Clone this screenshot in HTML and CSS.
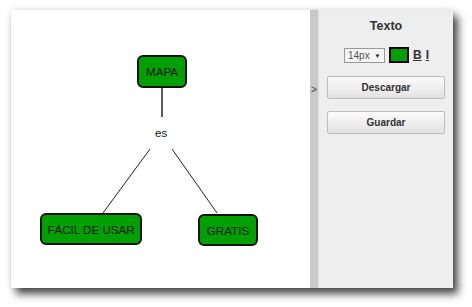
FILE: index.html
```html
<!DOCTYPE html>
<html lang="es">
<head>
  <meta charset="UTF-8" />
  <title>Mapa conceptual</title>
  <link rel="stylesheet" href="styles.css">
</head>
<body>
  <div class="page">
    <!-- ventana del editor -->
    <div class="window">
      <!-- lienzo con el mapa -->
      <div class="canvas">
        <svg class="links" width="299" height="278">
          <line x1="151" y1="78" x2="151" y2="107" class="link-thick" />
          <line x1="139" y1="139" x2="92" y2="203" />
          <line x1="161" y1="139" x2="206" y2="203" />
        </svg>
        <div class="node node-mapa">MAPA</div>
        <div class="label label-es">es</div>
        <div class="node node-facil">FÁCIL DE USAR</div>
        <div class="node node-gratis">GRATIS</div>
      </div>

      <!-- barra para ocultar el panel -->
      <div class="divider"><span class="divider-arrow">&gt;</span></div>

      <!-- panel lateral -->
      <div class="panel">
        <div class="panel-title">Texto</div>
        <div class="text-tools">
          <div class="size-select">14px <span class="size-arrow">▼</span></div>
          <div class="swatch"></div>
          <span class="fmt fmt-b">B</span>
          <span class="fmt fmt-i">I</span>
        </div>
        <button class="panel-btn btn-first">Descargar</button>
        <button class="panel-btn">Guardar</button>
      </div>
    </div>
  </div>
</body>
</html>
```

FILE: styles.css
```css
* {
  box-sizing: border-box;
}

html, body {
  margin: 0;
  padding: 0;
  background-color: #ffffff;
  font-family: 'Liberation Sans', Arial, sans-serif;
  color: #111;
  overflow: hidden;
}

.page {
  padding: 10px 0 0 11px;
  height: 307px;
}

/* ===== ventana ===== */
.window {
  display: flex;
  width: 442px;
  height: 278px;
  background-color: #fff;
  box-shadow: 5px 6px 8px rgba(0, 0, 0, 0.7), 0 0 6px rgba(0, 0, 0, 0.12);
}

/* ===== lienzo ===== */
.canvas {
  position: relative;
  width: 299px;
  height: 100%;
  background-color: #fff;
  overflow: hidden;
}

.links {
  position: absolute;
  left: 0;
  top: 0;
}

.links line {
  stroke: #222;
  stroke-width: 1;
}

.links .link-thick {
  stroke: #333;
  stroke-width: 1.6;
}

.node {
  position: absolute;
  display: flex;
  align-items: center;
  justify-content: center;
  background-color: #00a000;
  border: 2px solid #111;
  border-radius: 6px;
  font-size: 11.6px;
  color: #111;
}

.node-mapa   { left: 126px; top: 45px;  width: 50px;  height: 33px; }
.node-facil  { left: 29px;  top: 203px; width: 102px; height: 32px; }
.node-gratis { left: 187px; top: 204px; width: 60px;  height: 32px; }

.label {
  position: absolute;
  font-size: 11.6px;
  color: #111;
}

.label-es {
  left: 144px;
  top: 116px;
}

/* ===== separador ===== */
.divider {
  width: 9px;
  height: 100%;
  background-color: #c9c9c9;
  border-right: 1px solid #dedede;
  padding-top: 69px;
  text-align: center;
}

.divider-arrow {
  font-size: 10px;
  color: #444;
  line-height: 12px;
}

/* ===== panel lateral ===== */
.panel {
  flex: 1;
  display: flex;
  flex-direction: column;
  align-items: center;
  background-color: #eeeeee;
  padding: 8px 8px 0;
}

.panel-title {
  font-size: 12.5px;
  font-weight: bold;
  color: #333;
  line-height: 16px;
}

.text-tools {
  display: flex;
  align-items: center;
  margin-top: 13px;
  height: 16px;
  padding-left: 1px;
}

.size-select {
  width: 41px;
  height: 15px;
  border: 1px solid #999;
  background-color: #f4f4f4;
  font-size: 10px;
  color: #555;
  line-height: 13px;
  padding-left: 3px;
}

.size-arrow {
  font-size: 6px;
  color: #111;
  margin-left: 2px;
  vertical-align: 1px;
}

.swatch {
  width: 20px;
  height: 16px;
  margin-left: 4px;
  background-color: #00a000;
  border: 2px solid #000;
}

.fmt {
  font-size: 12px;
  font-weight: bold;
  color: #333;
  text-decoration: underline;
}

.fmt-b { margin-left: 4px; }
.fmt-i { margin-left: 4px; }

.panel-btn {
  width: 118px;
  height: 23px;
  margin-top: 12px;
  border: 1px solid #bdbdbd;
  border-radius: 2px;
  background: linear-gradient(#fbfbfb, #e2e2e2);
  font-family: 'Liberation Sans', Arial, sans-serif;
  font-size: 10px;
  font-weight: bold;
  color: #333;
  padding: 0;
}

.btn-first {
  margin-top: 13px;
}
```
